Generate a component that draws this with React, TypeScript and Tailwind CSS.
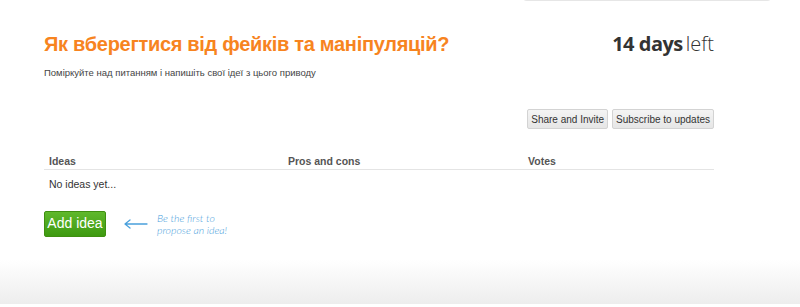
export default function App() {
  return (
    <div className="relative flex h-[307px] w-[800px] flex-col overflow-hidden bg-white font-['Liberation_Sans',sans-serif]">
      <div className="absolute left-[521px] top-[-10px] h-[11px] w-[252px] rounded-b-md border-b border-[#e6e6e6] bg-white" />
      <div className="ml-[44px] w-[670px] pt-[31px]">
        <div className="flex items-start justify-between">
          <h1 className="text-[20px] font-bold leading-[26px] tracking-[-0.3px] text-[#f7841f]">
            Як вберегтися від фейків та маніпуляцій?
          </h1>
          <div className="font-['Open_Sans',sans-serif] text-[20px] leading-[26px] text-[#333]">
            <span className="font-bold tracking-[-0.5px]">14 days</span>
            <span className="ml-[3px] font-light">left</span>
          </div>
        </div>
        <p className="mt-[9px] text-[9.5px] leading-[14px] text-[#444]">
          Поміркуйте над питанням і напишіть свої ідеї з цього приводу
        </p>
        <div className="mt-[29px] flex justify-end gap-[4px]">
          <button className="h-[20px] rounded-[2px] border border-[#d3d3d3] bg-gradient-to-b from-[#f4f4f4] to-[#e6e6e6] px-[3px] text-[10px] text-[#333]">
            Share and Invite
          </button>
          <button className="h-[20px] rounded-[2px] border border-[#d3d3d3] bg-gradient-to-b from-[#f4f4f4] to-[#e6e6e6] px-[3px] text-[10px] text-[#333]">
            Subscribe to updates
          </button>
        </div>
        <div className="mt-[25px]">
          <div className="grid grid-cols-[240px_240px_1fr] border-b border-[#e4e4e4] pb-[1px] pt-[1px] text-[10.5px] font-bold leading-[13px] text-[#555]">
            <div className="pl-[5px]">Ideas</div>
            <div className="pl-[4px]">Pros and cons</div>
            <div className="pl-[4px]">Votes</div>
          </div>
          <div className="pl-[5px] pt-[7px] text-[10.5px] text-[#333]">No ideas yet...</div>
        </div>
        <div className="mt-[18px] flex items-center">
          <button className="h-[26px] w-[62px] rounded-[2px] border border-[#3f8f10] bg-gradient-to-b from-[#5fb82b] to-[#3e9a0f] text-[14px] text-white">
            Add idea
          </button>
          <svg width="26" height="10" viewBox="0 0 26 10" className="ml-[17px]">
            <path d="M24 5 H2 M7 1 L2 5 L7 9" stroke="#4aa0dc" strokeWidth="1.3" fill="none" strokeLinecap="round" strokeLinejoin="round" />
          </svg>
          <div className="ml-[8px] font-['Lato',sans-serif] text-[10.5px] font-light italic leading-[12px] text-[#4aa0dc]">
            Be the first to
            <br />
            propose an idea!
          </div>
        </div>
      </div>
      <div className="mt-auto h-[44px] bg-gradient-to-b from-white to-[#ededed]" />
      <div className="h-[3px] bg-white" />
    </div>
  );
}
